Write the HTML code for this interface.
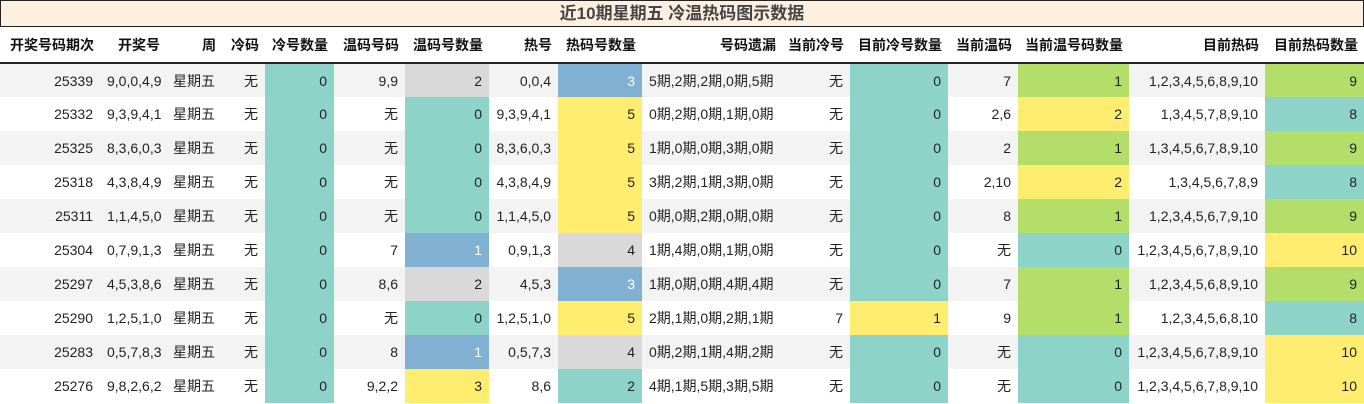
<!DOCTYPE html><html><head><meta charset="utf-8"><style>
*{margin:0;padding:0;box-sizing:border-box}
body{width:1364px;height:404px;background:#fff;font-family:"Liberation Sans","Noto Sans CJK SC",sans-serif;color:#222;overflow:hidden;position:relative}
.title{position:absolute;left:0;top:0;width:1364px;height:27px;background:#fef0e1;border:1px solid #222;text-align:center;font-weight:bold;font-size:17px;line-height:25px;color:#444}
table{position:absolute;left:0;top:27px;border-collapse:collapse;table-layout:fixed;width:1364px}
th{height:36px;font-size:14px;font-weight:bold;text-align:right;padding:0 6px;border-bottom:2px solid #222;white-space:nowrap;color:#111}
td{height:34px;font-size:14px;text-align:right;padding:0 7px;white-space:nowrap}
tbody tr:nth-child(odd) td{background:#f3f3f3}
tbody tr td.T{background:#8dd3c7}
tbody tr td.G{background:#d9d9d9}
tbody tr td.B{background:#80b1d3;color:#fff}
tbody tr td.Y{background:#ffed6f}
tbody tr td.R{background:#b3de69}
td.L{text-align:left}
</style></head><body>
<div class="title">近10期星期五 冷温热码图示数据</div>
<table>
<colgroup><col style="width:100px"><col style="width:66px"><col style="width:56px"><col style="width:43px"><col style="width:69px"><col style="width:71px"><col style="width:84px"><col style="width:69px"><col style="width:84px"><col style="width:140px"><col style="width:68px"><col style="width:98px"><col style="width:70px"><col style="width:111px"><col style="width:136px"><col style="width:99px"></colgroup>
<thead><tr><th>开奖号码期次</th><th>开奖号</th><th>周</th><th>冷码</th><th>冷号数量</th><th>温码号码</th><th>温码号数量</th><th>热号</th><th>热码号数量</th><th>号码遗漏</th><th>当前冷号</th><th>目前冷号数量</th><th>当前温码</th><th>当前温号码数量</th><th>目前热码</th><th>目前热码数量</th></tr></thead>
<tbody>
<tr><td>25339</td><td>9,0,0,4,9</td><td>星期五</td><td>无</td><td class="T">0</td><td>9,9</td><td class="G">2</td><td>0,0,4</td><td class="B">3</td><td class="L">5期,2期,2期,0期,5期</td><td>无</td><td class="T">0</td><td>7</td><td class="R">1</td><td>1,2,3,4,5,6,8,9,10</td><td class="R">9</td></tr>
<tr><td>25332</td><td>9,3,9,4,1</td><td>星期五</td><td>无</td><td class="T">0</td><td>无</td><td class="T">0</td><td>9,3,9,4,1</td><td class="Y">5</td><td class="L">0期,2期,0期,1期,0期</td><td>无</td><td class="T">0</td><td>2,6</td><td class="Y">2</td><td>1,3,4,5,7,8,9,10</td><td class="T">8</td></tr>
<tr><td>25325</td><td>8,3,6,0,3</td><td>星期五</td><td>无</td><td class="T">0</td><td>无</td><td class="T">0</td><td>8,3,6,0,3</td><td class="Y">5</td><td class="L">1期,0期,0期,3期,0期</td><td>无</td><td class="T">0</td><td>2</td><td class="R">1</td><td>1,3,4,5,6,7,8,9,10</td><td class="R">9</td></tr>
<tr><td>25318</td><td>4,3,8,4,9</td><td>星期五</td><td>无</td><td class="T">0</td><td>无</td><td class="T">0</td><td>4,3,8,4,9</td><td class="Y">5</td><td class="L">3期,2期,1期,3期,0期</td><td>无</td><td class="T">0</td><td>2,10</td><td class="Y">2</td><td>1,3,4,5,6,7,8,9</td><td class="T">8</td></tr>
<tr><td>25311</td><td>1,1,4,5,0</td><td>星期五</td><td>无</td><td class="T">0</td><td>无</td><td class="T">0</td><td>1,1,4,5,0</td><td class="Y">5</td><td class="L">0期,0期,2期,0期,0期</td><td>无</td><td class="T">0</td><td>8</td><td class="R">1</td><td>1,2,3,4,5,6,7,9,10</td><td class="R">9</td></tr>
<tr><td>25304</td><td>0,7,9,1,3</td><td>星期五</td><td>无</td><td class="T">0</td><td>7</td><td class="B">1</td><td>0,9,1,3</td><td class="G">4</td><td class="L">1期,4期,0期,1期,0期</td><td>无</td><td class="T">0</td><td>无</td><td class="T">0</td><td>1,2,3,4,5,6,7,8,9,10</td><td class="Y">10</td></tr>
<tr><td>25297</td><td>4,5,3,8,6</td><td>星期五</td><td>无</td><td class="T">0</td><td>8,6</td><td class="G">2</td><td>4,5,3</td><td class="B">3</td><td class="L">1期,0期,0期,4期,4期</td><td>无</td><td class="T">0</td><td>7</td><td class="R">1</td><td>1,2,3,4,5,6,8,9,10</td><td class="R">9</td></tr>
<tr><td>25290</td><td>1,2,5,1,0</td><td>星期五</td><td>无</td><td class="T">0</td><td>无</td><td class="T">0</td><td>1,2,5,1,0</td><td class="Y">5</td><td class="L">2期,1期,0期,2期,1期</td><td>7</td><td class="Y">1</td><td>9</td><td class="R">1</td><td>1,2,3,4,5,6,8,10</td><td class="T">8</td></tr>
<tr><td>25283</td><td>0,5,7,8,3</td><td>星期五</td><td>无</td><td class="T">0</td><td>8</td><td class="B">1</td><td>0,5,7,3</td><td class="G">4</td><td class="L">0期,2期,1期,4期,2期</td><td>无</td><td class="T">0</td><td>无</td><td class="T">0</td><td>1,2,3,4,5,6,7,8,9,10</td><td class="Y">10</td></tr>
<tr><td>25276</td><td>9,8,2,6,2</td><td>星期五</td><td>无</td><td class="T">0</td><td>9,2,2</td><td class="Y">3</td><td>8,6</td><td class="T">2</td><td class="L">4期,1期,5期,3期,5期</td><td>无</td><td class="T">0</td><td>无</td><td class="T">0</td><td>1,2,3,4,5,6,7,8,9,10</td><td class="Y">10</td></tr>
</tbody></table>
</body></html>
